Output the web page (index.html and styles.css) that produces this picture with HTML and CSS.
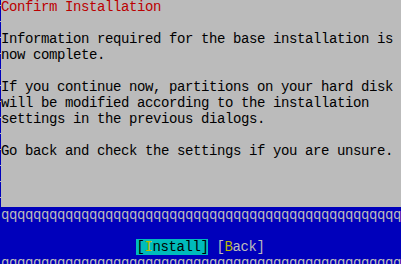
FILE: index.html
```html
<!DOCTYPE html>
<html lang="en">
<head>
    <meta charset="UTF-8">
    <title>Confirm Installation</title>
    <link rel="stylesheet" href="styles.css">
</head>
<body>
    <div class="screen">
        <div class="dialog">
            <div class="title">Confirm Installation</div>
            <div class="text">
Information required for the base installation is
now complete.

If you continue now, partitions on your hard disk
will be modified according to the installation
settings in the previous dialogs.

Go back and check the settings if you are unsure.</div>
        </div>

        <div class="footer">
            <div class="hline">qqqqqqqqqqqqqqqqqqqqqqqqqqqqqqqqqqqqqqqqqqqqqqqqqq</div>
            <div class="blank"></div>
            <div class="buttons"><span class="btn active">[<span class="hot">I</span>nstall]</span> <span class="btn">[<span class="hot">B</span>ack]</span></div>
            <div class="hline">qqqqqqqqqqqqqqqqqqqqqqqqqqqqqqqqqqqqqqqqqqqqqqqqqq</div>
        </div>
    </div>
</body>
</html>
```

FILE: styles.css
```css
body {
    margin: 0;
    padding: 0;
    background: #0000bb;
    overflow: hidden;
}

.screen {
    margin-top: -1px;
    font-family: "Liberation Mono", "Courier New", monospace;
    font-size: 14px;
    letter-spacing: -0.4px;
    line-height: 16px;
    color: #000000;
}

/* left edge: the vertical line chars, broken every row */
.dialog {
    height: 208px;
    border-left: 1px solid transparent;
    background-color: #bbbbbb;
    background-image: repeating-linear-gradient(to bottom, #0000bb 0, #0000bb 6px, #bbbbbb 6px, #bbbbbb 7px, #0000bb 7px, #0000bb 16px);
    background-size: 1px 100%;
    background-repeat: no-repeat;
    background-origin: border-box;
}

.title {
    color: #bb0000;
    white-space: pre;
}

.text {
    white-space: pre;
}

.footer {
    background: #0000bb;
    color: #bbbbbb;
}

.hline {
    height: 16px;
    padding-left: 1px;
    white-space: nowrap;
}

.blank {
    height: 16px;
}

.buttons {
    height: 16px;
    text-align: center;
    white-space: pre;
}

.btn {
    color: #bbbbbb;
}

.btn.active {
    background: #00bbbb;
    color: #000000;
}

.hot {
    color: #bbbb00;
}
```
